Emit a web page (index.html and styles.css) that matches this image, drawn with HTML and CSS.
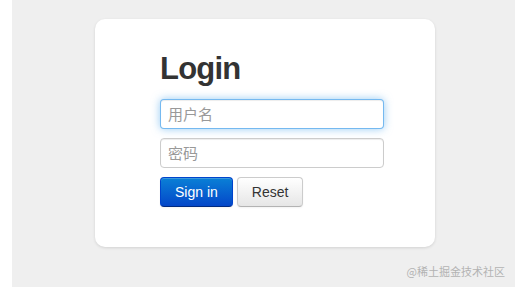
FILE: index.html
```html
<!DOCTYPE html>
<html lang="zh-CN">
<head>
    <meta charset="UTF-8">
    <meta name="viewport" content="width=device-width, initial-scale=1.0">
    <title>Login</title>
    <link rel="stylesheet" href="styles.css">
</head>
<body>
    <div class="page">
        <div class="login-card">
            <h2 class="login-title">Login</h2>
            <form class="login-form">
                <input type="text" class="field focused" placeholder="用户名" autofocus>
                <input type="password" class="field" placeholder="密码">
                <div class="actions">
                    <button type="button" class="btn btn-primary">Sign in</button>
                    <button type="reset" class="btn">Reset</button>
                </div>
            </form>
        </div>
        <div class="watermark">@稀土掘金技术社区</div>
    </div>
</body>
</html>
```

FILE: styles.css
```css
* {
    margin: 0;
    padding: 0;
    box-sizing: border-box;
}

body {
    font-family: "Liberation Sans", Arial, "Noto Sans CJK SC", sans-serif;
    background: #fff;
    color: #333;
}

.page {
    margin-left: 12px;
    height: 287px;
    background: #efefef;
    padding-top: 19px;
    display: flex;
    flex-direction: column;
}

.login-card {
    margin-left: 83px;
    width: 340px;
    height: 228px;
    background: #fff;
    border-radius: 10px;
    box-shadow: 0 1px 3px rgba(0, 0, 0, 0.12);
    padding: 32px 65px 0;
}

.login-title {
    font-size: 31px;
    line-height: 36px;
    font-weight: bold;
    letter-spacing: -0.8px;
    color: #333;
    margin-bottom: 12px;
}

.login-form {
    display: flex;
    flex-direction: column;
    gap: 9px;
    width: 224px;
}

.field {
    height: 30px;
    padding: 4px 7px;
    font-size: 15px;
    font-family: "Liberation Sans", Arial, "Noto Sans CJK SC", sans-serif;
    color: #555;
    border: 1px solid #ccc;
    border-radius: 4px;
    box-shadow: inset 0 1px 1px rgba(0, 0, 0, 0.075);
    outline: none;
}

.field::placeholder {
    color: #999;
}

.field.focused,
.field:focus {
    border-color: rgba(82, 168, 236, 0.8);
    box-shadow: inset 0 1px 1px rgba(0, 0, 0, 0.075), 0 0 8px rgba(82, 168, 236, 0.6);
}

.actions {
    display: flex;
    gap: 4px;
}

.btn {
    height: 30px;
    padding: 0 14px;
    font-size: 14px;
    font-family: "Liberation Sans", Arial, sans-serif;
    color: #333;
    background: linear-gradient(#fff, #e6e6e6);
    border: 1px solid #ccc;
    border-bottom-color: #b3b3b3;
    border-radius: 4px;
    box-shadow: inset 0 1px 0 rgba(255, 255, 255, 0.2), 0 1px 2px rgba(0, 0, 0, 0.05);
    cursor: pointer;
}

.btn-primary {
    color: #fff;
    background: linear-gradient(#0a80d6, #0447c9);
    border-color: #0044cc #0044cc #002a80;
}

.watermark {
    margin-top: auto;
    align-self: flex-end;
    margin-right: 10px;
    margin-bottom: 8px;
    font-size: 11px;
    color: #b3b3b3;
    font-family: "Noto Sans CJK SC", sans-serif;
}
```
